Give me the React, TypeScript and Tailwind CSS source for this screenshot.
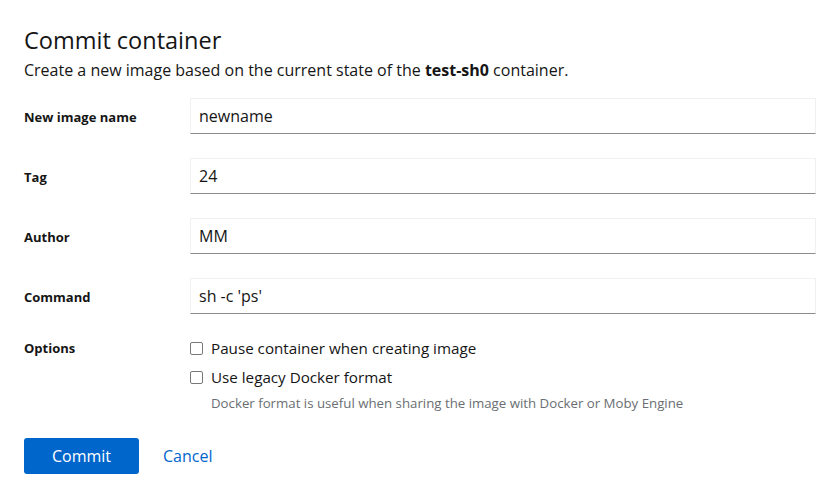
import React, { useState } from "react";

type Field = { label: string; value: string };

const fields: Field[] = [
  { label: "New image name", value: "newname" },
  { label: "Tag", value: "24" },
  { label: "Author", value: "MM" },
  { label: "Command", value: "sh -c 'ps'" },
];

function Check({ label, helper }: { label: string; helper?: string }) {
  const [checked, setChecked] = useState(false);
  return (
    <div className="flex flex-col">
      <label className="flex items-center gap-[8px] h-[24px] cursor-pointer">
        <input
          type="checkbox"
          checked={checked}
          onChange={() => setChecked(!checked)}
          className="w-[13px] h-[13px] appearance-none border border-[#76797c] rounded-[2px] bg-white checked:bg-[#0066cc] checked:border-[#0066cc]"
        />
        <span className="text-[15.2px] text-[#151515]">{label}</span>
      </label>
      {helper && (
        <p className="pl-[21px] mt-[5px] text-[13.25px] leading-[18px] text-[#6a6e73]">{helper}</p>
      )}
    </div>
  );
}

export default function App() {
  return (
    <div
      className="w-[840px] h-[497px] bg-white px-[24px] pt-[24px] text-[#151515]"
      style={{ fontFamily: '"Open Sans", "Noto Sans", sans-serif' }}
    >
      <h1 className="text-[23.5px] leading-[32px] font-normal">Commit container</h1>
      <p className="mt-[2px] text-[16px] leading-[24px]">
        Create a new image based on the current state of the{" "}
        <span className="font-bold">test-sh0</span> container.
      </p>

      <div className="mt-[16px] grid grid-cols-[166px_1fr] gap-y-[24px]">
        {fields.map((f) => (
          <React.Fragment key={f.label}>
            <label className="flex items-center pt-[3px] text-[13px] font-bold h-[36px]">{f.label}</label>
            <input
              defaultValue={f.value}
              className="h-[36px] px-[8px] text-[16px] text-[#151515] border border-[#f0f0f0] border-b-[#8a8d90] outline-none"
            />
          </React.Fragment>
        ))}
        <div className="text-[13px] font-bold h-[24px] flex items-center mt-[-1px]">Options</div>
        <div className="flex flex-col gap-[5px] mt-[-2px]">
          <Check label="Pause container when creating image" />
          <Check
            label="Use legacy Docker format"
            helper="Docker format is useful when sharing the image with Docker or Moby Engine"
          />
        </div>
      </div>

      <div className="mt-[26px] flex items-center gap-[24px]">
        <button className="h-[36px] w-[115px] rounded-[3px] bg-[#0066cc] text-white text-[16px]">
          Commit
        </button>
        <button className="text-[16px] text-[#0066cc]">Cancel</button>
      </div>
    </div>
  );
}
